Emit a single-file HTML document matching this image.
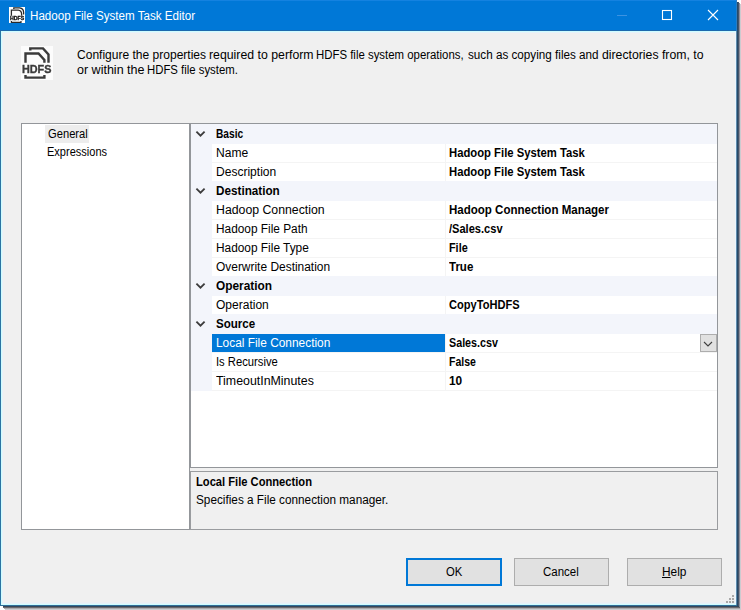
<!DOCTYPE html>
<html><head><meta charset="utf-8"><title>Hadoop File System Task Editor</title>
<style>
html,body{margin:0;padding:0;background:#fff;}
body{width:741px;height:610px;position:relative;overflow:hidden;font-family:"Liberation Sans", sans-serif;font-size:12px;}
.abs,.tx,.cat,.prow,.sel,.chev,.ico,.btn{position:absolute;}
.tx{white-space:nowrap;line-height:14px;height:14px;transform-origin:0 0;display:block;}
.sh{position:absolute;}
#win{left:0;top:0;width:737px;height:606px;background:#2b74a3;}
#rcol{left:736px;top:31px;width:1px;height:574px;background:#5f8bae;}
#brow{left:0;top:605px;width:737px;height:1px;background:#2f6e98;}
#halo1{left:1px;top:31px;width:735px;height:574px;background:#cffdff;}
#halo2{left:2px;top:32px;width:733px;height:572px;background:#e6f3fa;}
#haloR{left:735px;top:32px;width:1px;height:572px;background:#eaf5fd;}
#client{left:3px;top:33px;width:732px;height:569px;background:#f0f0f0;border-bottom:1px solid #ecf0f4;}
#title{left:0;top:0;width:737px;height:29px;background:#0078d7;border-top:1px solid #1482e0;border-bottom:1px solid #1d69ad;}
#tR{left:736px;top:0;width:1px;height:31px;background:#2a7cc4;}
#tree{left:21px;top:123px;width:169px;height:407px;box-sizing:border-box;border:1px solid #93969a;background:#fff;}
#treesel{left:45px;top:125px;width:44px;height:18px;background:#ededed;}
#grid{left:190px;top:123px;width:528px;height:345px;box-sizing:border-box;border:1px solid #93969a;background:#fff;}
#gutter{left:191px;top:124px;width:21px;height:267px;background:#f3f5fb;}
.cat{left:191px;width:526px;height:20px;background:#f3f5fb;}
.prow{left:212px;width:505px;height:19px;box-sizing:border-box;border-bottom:1px solid #f4f4f4;background:#fff;margin-top:1px;}
#vdiv{left:445px;top:124px;width:1px;height:266px;background:#f4f4f4;}
.sel{left:212px;width:233px;height:18px;background:#0078d7;}
#dd{left:700px;top:334px;width:17px;height:18px;box-sizing:border-box;border:1px solid #adadad;background:#e1e1e1;}
#desc{left:190px;top:471px;width:528px;height:59px;box-sizing:border-box;border:1px solid #9a9c9f;background:#f0f0f0;}
.btn{top:558px;height:28px;width:95px;box-sizing:border-box;border:1px solid #adadad;background:#e1e1e1;}
.grip{width:2px;height:2px;background:#a8a8a8;}
.ico{will-change:transform;}
</style></head><body>
<div class="sh" style="left:737px;top:2px;width:1px;height:605px;background:#264b69"></div>
<div class="sh" style="left:738px;top:2px;width:1px;height:606px;background:#45546a"></div>
<div class="sh" style="left:739px;top:3px;width:1px;height:606px;background:#8e8e98"></div>
<div class="sh" style="left:740px;top:4px;width:1px;height:606px;background:#cdcbd0"></div>
<div class="sh" style="left:3px;top:606px;width:736px;height:1px;background:#34475a"></div>
<div class="sh" style="left:3px;top:607px;width:737px;height:1px;background:#6a676c"></div>
<div class="sh" style="left:4px;top:608px;width:736px;height:1px;background:#aaa9ac"></div>
<div class="sh" style="left:5px;top:609px;width:736px;height:1px;background:#cdcccf"></div>
<div id="win" class="abs"></div>
<div id="rcol" class="abs"></div>
<div id="brow" class="abs"></div>
<div id="halo1" class="abs"></div>
<div id="halo2" class="abs"></div>
<div id="haloR" class="abs"></div>
<div id="client" class="abs"></div>
<div id="title" class="abs"></div>
<div id="tR" class="abs"></div>
<svg class="ico" style="left:9px;top:7px" width="16" height="16" viewBox="0 0 16 16">
<rect width="16" height="16" fill="#fff"/>
<path d="M4.8 1.9 V0.8 H10.6 Q14.5 1.3 14.6 5.2 V7.4" fill="none" stroke="#2a2a2a" stroke-width="1.3"/>
<path d="M2.4 8.8 V3.1 H9.2 Q12.5 3.6 12.6 6.8 V8.8" fill="none" stroke="#2a2a2a" stroke-width="1.3"/>
<path d="M2.4 13.9 V15.3 H12 V13.9" fill="none" stroke="#2a2a2a" stroke-width="1.2"/>
<text x="0.9" y="12.8" style="font-family:'Liberation Sans',sans-serif;font-weight:700;font-size:5.2px" fill="#111" stroke="#111" stroke-width="0.3" textLength="14.3" lengthAdjust="spacingAndGlyphs">HDFS</text>
</svg>
<svg class="abs" style="left:612px;top:5px" width="112" height="22" viewBox="612 5 112 22">
<path d="M617 15.5 H627" stroke="#3c93e2" stroke-width="1" fill="none"/>
<rect x="662.5" y="10.5" width="9" height="9" fill="none" stroke="#fff" stroke-width="1.1"/>
<path d="M708 10 L718 20 M718 10 L708 20" stroke="#fff" stroke-width="1.1" fill="none"/>
</svg>
<svg class="ico " style="left:21px;top:46px" width="32" height="34" viewBox="0 0 32 34" preserveAspectRatio="none">
<rect x="-50" y="-50" width="200" height="200" fill="#fcfcfc"/>
<path d="M9.3 4.6 V2.4 H22 L27.5 8.5 V16.7" fill="none" stroke="#3b3b3b" stroke-width="2.4"/>
<path d="M4.5 16.7 V7.5 H17.5 L23.4 14 V16.7" fill="none" stroke="#3b3b3b" stroke-width="2.4"/>
<path d="M4.5 28.9 V31.6 H23.4 V28.9" fill="none" stroke="#3b3b3b" stroke-width="2.4"/>
<text x="0.9" y="26.7" style="font-family:'Liberation Sans',sans-serif;font-weight:700;font-size:11.2px" fill="#3b3b3b" stroke="#3b3b3b" stroke-width="0.35" textLength="29.5" lengthAdjust="spacingAndGlyphs">HDFS</text>
</svg>
<div id="tree" class="abs"></div>
<div id="treesel" class="abs"></div>
<div id="grid" class="abs"></div>
<div id="gutter" class="abs"></div>
<div class="prow" style="top:143px"></div>
<div class="prow" style="top:162px"></div>
<div class="prow" style="top:200px"></div>
<div class="prow" style="top:219px"></div>
<div class="prow" style="top:238px"></div>
<div class="prow" style="top:257px"></div>
<div class="prow" style="top:295px"></div>
<div class="prow" style="top:333px"></div>
<div class="sel" style="top:334px"></div>
<div class="prow" style="top:352px"></div>
<div class="prow" style="top:371px"></div>
<div id="vdiv" class="abs"></div>
<div class="cat" style="top:124px"></div>
<svg class="chev" style="left:195px;top:130px" width="11" height="8" viewBox="0 0 11 8"><path d="M1.4 1.6 L5.5 5.7 L9.6 1.6" fill="none" stroke="#3c3c3c" stroke-width="1.8"/></svg>
<div class="cat" style="top:181px"></div>
<svg class="chev" style="left:195px;top:187px" width="11" height="8" viewBox="0 0 11 8"><path d="M1.4 1.6 L5.5 5.7 L9.6 1.6" fill="none" stroke="#3c3c3c" stroke-width="1.8"/></svg>
<div class="cat" style="top:276px"></div>
<svg class="chev" style="left:195px;top:282px" width="11" height="8" viewBox="0 0 11 8"><path d="M1.4 1.6 L5.5 5.7 L9.6 1.6" fill="none" stroke="#3c3c3c" stroke-width="1.8"/></svg>
<div class="cat" style="top:314px"></div>
<svg class="chev" style="left:195px;top:320px" width="11" height="8" viewBox="0 0 11 8"><path d="M1.4 1.6 L5.5 5.7 L9.6 1.6" fill="none" stroke="#3c3c3c" stroke-width="1.8"/></svg>
<div id="dd" class="abs"><svg class="abs" style="left:2.3px;top:5.6px" width="10" height="7" viewBox="0 0 10 7"><path d="M1 1 L5 5 L9 1" fill="none" stroke="#404040" stroke-width="1.1"/></svg></div>
<div id="desc" class="abs"></div>
<div class="btn" style="left:406px;width:96px;border:2px solid #0078d7"></div>
<div class="btn" style="left:514px"></div>
<div class="btn" style="left:627px"></div>
<div class="abs grip" style="left:732px;top:595px"></div>
<div class="abs grip" style="left:729px;top:598px"></div>
<div class="abs grip" style="left:732px;top:598px"></div>
<div class="abs grip" style="left:726px;top:601px"></div>
<div class="abs grip" style="left:729px;top:601px"></div>
<div class="abs grip" style="left:732px;top:601px"></div>
<span id="t0" class="tx" style="left:30.00px;top:9.00px;font-weight:normal;color:#fff;transform:scaleX(0.9684)">Hadoop File System Task Editor</span>
<span id="t1" class="tx" style="left:77.00px;top:48.00px;font-weight:normal;color:#000;transform:scaleX(1.0023)">Configure the properties</span>
<span id="t2" class="tx" style="left:209.00px;top:48.00px;font-weight:normal;color:#000;transform:scaleX(1.0247)">required to perform</span>
<span id="t3" class="tx" style="left:316.00px;top:48.00px;font-weight:normal;color:#000;transform:scaleX(0.9499)">HDFS file system operations,</span>
<span id="t4" class="tx" style="left:468.00px;top:48.00px;font-weight:normal;color:#000;transform:scaleX(0.9740)">such as copying files and</span>
<span id="t5" class="tx" style="left:602.00px;top:48.00px;font-weight:normal;color:#000;transform:scaleX(1.0212)">directories from, to</span>
<span id="t6" class="tx" style="left:77.00px;top:63.00px;font-weight:normal;color:#000;transform:scaleX(1.0432)">or within the</span>
<span id="t7" class="tx" style="left:147.00px;top:63.00px;font-weight:normal;color:#000;transform:scaleX(0.9460)">HDFS file system.</span>
<span id="t8" class="tx" style="left:48.00px;top:127.00px;font-weight:normal;color:#000;transform:scaleX(0.9319)">General</span>
<span id="t9" class="tx" style="left:47.00px;top:145.00px;font-weight:normal;color:#000;transform:scaleX(0.9183)">Expressions</span>
<span id="t10" class="tx" style="left:216.00px;top:127.00px;font-weight:bold;color:#000;transform:scaleX(0.8473)">Basic</span>
<span id="t11" class="tx" style="left:216.00px;top:146.00px;font-weight:normal;color:#000;transform:scaleX(1.0057)">Name</span>
<span id="t12" class="tx" style="left:449.00px;top:146.00px;font-weight:bold;color:#000;transform:scaleX(0.9398)">Hadoop File System Task</span>
<span id="t13" class="tx" style="left:216.00px;top:165.00px;font-weight:normal;color:#000;transform:scaleX(1.0034)">Description</span>
<span id="t14" class="tx" style="left:449.00px;top:165.00px;font-weight:bold;color:#000;transform:scaleX(0.9398)">Hadoop File System Task</span>
<span id="t15" class="tx" style="left:216.00px;top:184.00px;font-weight:bold;color:#000;transform:scaleX(0.9756)">Destination</span>
<span id="t16" class="tx" style="left:216.00px;top:203.00px;font-weight:normal;color:#000;transform:scaleX(1.0242)">Hadoop Connection</span>
<span id="t17" class="tx" style="left:449.00px;top:203.00px;font-weight:bold;color:#000;transform:scaleX(0.9600)">Hadoop Connection Manager</span>
<span id="t18" class="tx" style="left:216.00px;top:222.00px;font-weight:normal;color:#000;transform:scaleX(0.9872)">Hadoop File Path</span>
<span id="t19" class="tx" style="left:449.00px;top:222.00px;font-weight:bold;color:#000;transform:scaleX(0.9222)">/Sales.csv</span>
<span id="t20" class="tx" style="left:216.00px;top:241.00px;font-weight:normal;color:#000;transform:scaleX(0.9891)">Hadoop File Type</span>
<span id="t21" class="tx" style="left:449.00px;top:241.00px;font-weight:bold;color:#000;transform:scaleX(0.9036)">File</span>
<span id="t22" class="tx" style="left:216.00px;top:260.00px;font-weight:normal;color:#000;transform:scaleX(0.9949)">Overwrite Destination</span>
<span id="t23" class="tx" style="left:449.00px;top:260.00px;font-weight:bold;color:#000;transform:scaleX(0.9585)">True</span>
<span id="t24" class="tx" style="left:216.00px;top:279.00px;font-weight:bold;color:#000;transform:scaleX(0.9888)">Operation</span>
<span id="t25" class="tx" style="left:216.00px;top:298.00px;font-weight:normal;color:#000;transform:scaleX(1.0019)">Operation</span>
<span id="t26" class="tx" style="left:449.00px;top:298.00px;font-weight:bold;color:#000;transform:scaleX(0.9231)">CopyToHDFS</span>
<span id="t27" class="tx" style="left:216.00px;top:317.00px;font-weight:bold;color:#000;transform:scaleX(0.9639)">Source</span>
<span id="t28" class="tx" style="left:216.00px;top:336.00px;font-weight:normal;color:#fff;transform:scaleX(0.9906)">Local File Connection</span>
<span id="t29" class="tx" style="left:449.00px;top:336.00px;font-weight:bold;color:#000;transform:scaleX(0.8946)">Sales.csv</span>
<span id="t30" class="tx" style="left:216.00px;top:355.00px;font-weight:normal;color:#000;transform:scaleX(0.9362)">Is Recursive</span>
<span id="t31" class="tx" style="left:449.00px;top:355.00px;font-weight:bold;color:#000;transform:scaleX(0.8765)">False</span>
<span id="t32" class="tx" style="left:216.00px;top:374.00px;font-weight:normal;color:#000;transform:scaleX(1.0309)">TimeoutInMinutes</span>
<span id="t33" class="tx" style="left:449.00px;top:374.00px;font-weight:bold;color:#000;transform:scaleX(0.9885)">10</span>
<span id="t34" class="tx" style="left:196.00px;top:475.00px;font-weight:bold;color:#000;transform:scaleX(0.9300)">Local File Connection</span>
<span id="t35" class="tx" style="left:196.00px;top:493.00px;font-weight:normal;color:#000;transform:scaleX(0.9809)">Specifies a File connection manager.</span>
<span id="t36" class="tx" style="left:446.00px;top:565.00px;font-weight:normal;color:#000;transform:scaleX(0.9399)">OK</span>
<span id="t37" class="tx" style="left:543.00px;top:565.00px;font-weight:normal;color:#000;transform:scaleX(0.9567)">Cancel</span>
<span id="t38" class="tx" style="left:662.00px;top:565.00px;font-weight:normal;color:#000;transform:scaleX(0.9912)"><u>H</u>elp</span>
</body></html>
